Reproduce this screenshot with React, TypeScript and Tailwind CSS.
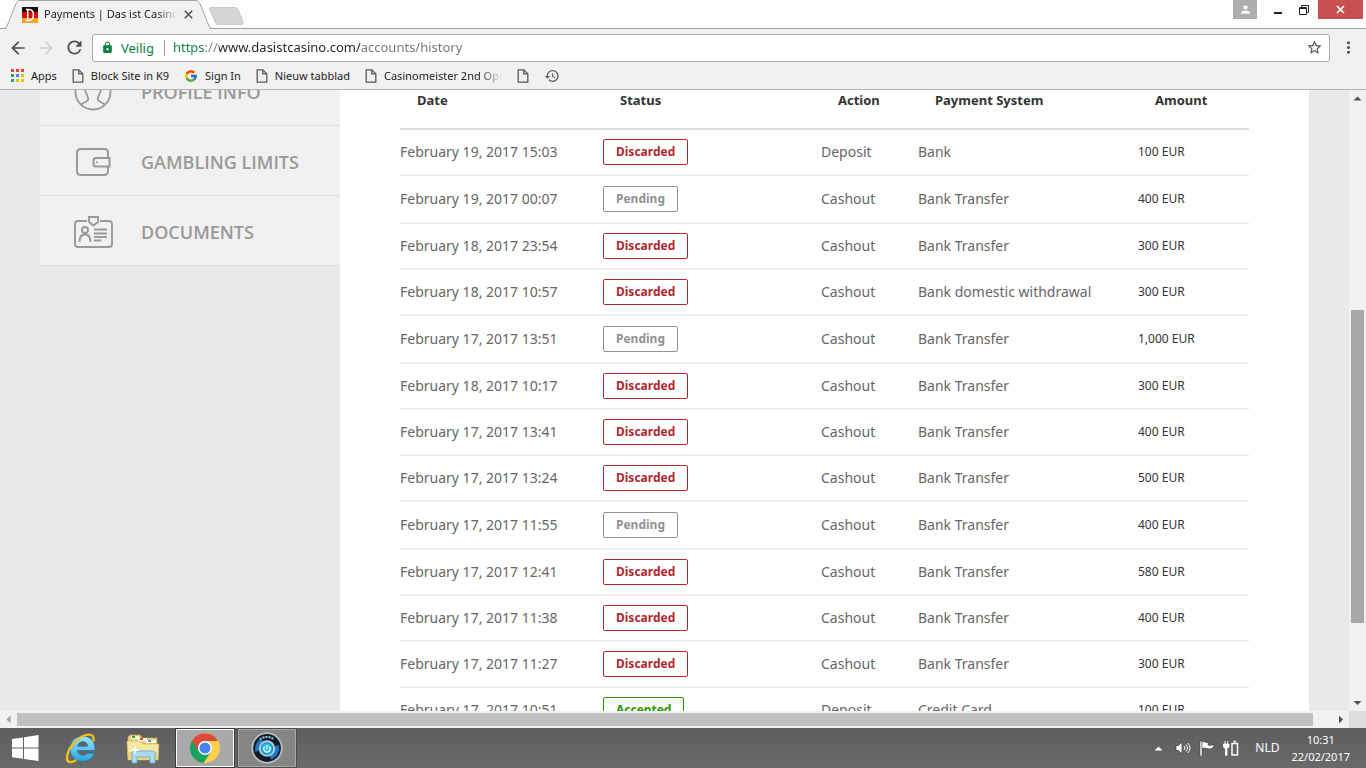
import { useState, type ReactNode } from 'react'
import { FcGoogle } from 'react-icons/fc'
import {
  MdArrowBack,
  MdArrowForward,
  MdHistory,
  MdLock,
  MdMoreVert,
  MdPerson,
  MdRefresh,
  MdStarBorder,
} from 'react-icons/md'

type Status = 'Discarded' | 'Pending' | 'Accepted'

type Payment = {
  date: string
  status: Status
  action: string
  system: string
  amount: string
}

const payments: Payment[] = [
  { date: 'February 19, 2017 15:03', status: 'Discarded', action: 'Deposit', system: 'Bank', amount: '100 EUR' },
  { date: 'February 19, 2017 00:07', status: 'Pending', action: 'Cashout', system: 'Bank Transfer', amount: '400 EUR' },
  { date: 'February 18, 2017 23:54', status: 'Discarded', action: 'Cashout', system: 'Bank Transfer', amount: '300 EUR' },
  { date: 'February 18, 2017 10:57', status: 'Discarded', action: 'Cashout', system: 'Bank domestic withdrawal', amount: '300 EUR' },
  { date: 'February 17, 2017 13:51', status: 'Pending', action: 'Cashout', system: 'Bank Transfer', amount: '1,000 EUR' },
  { date: 'February 18, 2017 10:17', status: 'Discarded', action: 'Cashout', system: 'Bank Transfer', amount: '300 EUR' },
  { date: 'February 17, 2017 13:41', status: 'Discarded', action: 'Cashout', system: 'Bank Transfer', amount: '400 EUR' },
  { date: 'February 17, 2017 13:24', status: 'Discarded', action: 'Cashout', system: 'Bank Transfer', amount: '500 EUR' },
  { date: 'February 17, 2017 11:55', status: 'Pending', action: 'Cashout', system: 'Bank Transfer', amount: '400 EUR' },
  { date: 'February 17, 2017 12:41', status: 'Discarded', action: 'Cashout', system: 'Bank Transfer', amount: '580 EUR' },
  { date: 'February 17, 2017 11:38', status: 'Discarded', action: 'Cashout', system: 'Bank Transfer', amount: '400 EUR' },
  { date: 'February 17, 2017 11:27', status: 'Discarded', action: 'Cashout', system: 'Bank Transfer', amount: '300 EUR' },
  { date: 'February 17, 2017 10:51', status: 'Accepted', action: 'Deposit', system: 'Credit Card', amount: '100 EUR' },
]

const statusStyles: Record<Status, string> = {
  Discarded: 'border-[#b0282e] text-[#b0282e]',
  Pending: 'border-[#919191] text-[#919191]',
  Accepted: 'border-[#279400] text-[#279400]',
}

function FileIcon() {
  return (
    <svg width="12" height="14" viewBox="0 0 12 14" fill="none" stroke="#5a5a5a" strokeWidth="1.3" className="shrink-0">
      <path d="M1.2 .8h5.6l4 4v8.4H1.2z" />
      <path d="M6.8 .8v4h4" />
    </svg>
  )
}

function AppsIcon() {
  const colors = ['#ea4335', '#ea4335', '#ea4335', '#34a05a', '#4285f4', '#fbbc05', '#34a05a', '#fbbc05', '#fbbc05']
  return (
    <svg width="13" height="13" viewBox="0 0 13 13">
      {colors.map((color, i) => (
        <rect key={i} x={(i % 3) * 5} y={Math.floor(i / 3) * 5} width="3" height="3" fill={color} />
      ))}
    </svg>
  )
}

function Favicon() {
  return (
    <svg width="16" height="16" viewBox="0 0 16 16" className="shrink-0">
      <rect width="16" height="6" fill="#1a0a08" />
      <rect y="5" width="16" height="6" fill="#d00a0a" />
      <rect y="11" width="16" height="5" fill="#f5a623" />
      <path d="M5.700 2.500v11M4 2.600h3c3 0 4.400 2 4.400 5.400s-1.400 5.400-4.400 5.400H4" fill="none" stroke="#fff" strokeWidth="1.500" />
    </svg>
  )
}

function TabStrip() {
  return (
    <div className="flex h-7 items-start justify-between bg-[#fdfdfd]">
      <div className="flex">
        <div className="relative h-[29px] w-[216px]">
          <svg className="absolute inset-0" width="216" height="29" viewBox="0 0 216 29" fill="none">
            <path d="M5 29c2-.5 2.300-1.500 3-3l9-22c.8-2 1.500-3.500 4-3.500h174c2.500 0 3.200 1.500 4 3.500l9 22c.7 1.500 1 2.500 3 3z" fill="#f1f1f1" />
            <path d="M0 28.500h3c2.500 0 3.300-1 4-2.500l9-22c.8-2 1.500-3.500 4-3.500h176c2.500 0 3.200 1.500 4 3.500l9 22c.7 1.500 1.500 2.500 4 2.500h3" stroke="#a3a3a3" />
          </svg>
          <div className="relative flex h-[29px] items-center gap-1.5 pl-[22px]">
            <Favicon />
            <span className="w-[134px] overflow-hidden whitespace-nowrap text-[11px] text-[#222] [mask-image:linear-gradient(to_right,#000_84%,transparent)]">
              Payments | Das ist Casino
            </span>
            <button type="button" aria-label="Close tab" className="shrink-0">
              <svg width="9" height="9" viewBox="0 0 9 9" stroke="#555" strokeWidth="1.600">
                <path d="M.8 .8l7.400 7.400M8.200 .8L.8 8.200" />
              </svg>
            </button>
          </div>
        </div>
        <button type="button" aria-label="New tab" className="-ml-2 mt-[7px] self-start">
          <svg width="36" height="18" viewBox="0 0 36 18">
            <path d="M3 .5h24.500c1.200 0 1.800.5 2.300 1.600l5.400 13.400c.4 1.200 0 1.800-1.200 1.800H10c-1.200 0-2-.5-2.500-1.600L1.700 2.300C1.200 1.100 1.700 .5 3 .5z" fill="#d5d5d5" stroke="#c6c6c6" />
          </svg>
        </button>
      </div>
      <div className="flex h-[19px] items-center pr-[3px]">
        <button type="button" aria-label="Profile" className="flex h-full w-6 items-center justify-center bg-[#aeaeae] text-white">
          <MdPerson size={13} />
        </button>
        <button type="button" aria-label="Minimize" className="ml-2 flex h-full w-[26px] items-center justify-center">
          <svg width="9" height="10" viewBox="0 0 9 10">
            <path d="M0 7h8v2H0z" fill="#222" />
          </svg>
        </button>
        <button type="button" aria-label="Restore" className="flex h-full w-[26px] items-center justify-center">
          <svg width="10" height="10" viewBox="0 0 10 10" fill="none" stroke="#222">
            <path d="M2.500 2V.5h7v7H8" />
            <path d="M.5 2.500h7v7h-7zM.5 3.500h7" />
          </svg>
        </button>
        <button type="button" aria-label="Close" className="ml-px flex h-full w-[45px] items-center justify-center bg-[#c75050]">
          <svg width="9" height="9" viewBox="0 0 9 9" stroke="#fff" strokeWidth="1.700">
            <path d="M1 1l7 7M8 1L1 8" />
          </svg>
        </button>
      </div>
    </div>
  )
}

function AddressBar() {
  const [url, setUrl] = useState('https://www.dasistcasino.com/accounts/history')

  return (
    <div className="flex h-[38px] items-center border-t border-[#a3a3a3] pl-2 pr-2">
      <button type="button" aria-label="Back" className="w-7 text-[#4f4f4f]">
        <MdArrowBack size={20} />
      </button>
      <button type="button" aria-label="Forward" className="w-7 text-[#cfcfcf]">
        <MdArrowForward size={20} />
      </button>
      <button type="button" aria-label="Reload" className="w-7 text-[#4f4f4f]">
        <MdRefresh size={21} />
      </button>
      <div className="flex h-7 flex-1 items-center rounded-[3px] border border-[#a9a9a9] bg-white pl-2 pr-1.5">
        <MdLock size={13} className="text-[#0b8043]" />
        <label htmlFor="omnibox" className="ml-[7px] border-r border-[#9a9a9a] pr-2.5 text-[13px] leading-4 text-[#0b8043]">
          Veilig
        </label>
        <input
          id="omnibox"
          type="text"
          value={url}
          onChange={(event) => setUrl(event.target.value)}
          className="ml-2 flex-1 bg-[linear-gradient(to_right,#0b8043_32px,#808080_32px,#808080_46px,#222_46px,#222_187px,#757575_187px)] bg-clip-text text-[13px] text-transparent caret-black outline-none"
        />
        <button type="button" aria-label="Bookmark this page" className="text-[#555]">
          <MdStarBorder size={17} />
        </button>
      </div>
      <button type="button" aria-label="Menu" className="ml-[9px] text-[#555]">
        <MdMoreVert size={19} />
      </button>
    </div>
  )
}

function Bookmark({ icon, label, className = '' }: { icon: ReactNode; label?: string; className?: string }) {
  return (
    <a href="#" aria-label={label ?? 'Bookmark'} className={`flex items-center gap-[7px] ${className}`}>
      {icon}
      {label ? <span className="overflow-hidden whitespace-nowrap">{label}</span> : null}
    </a>
  )
}

function BookmarksBar() {
  return (
    <nav className="flex h-6 items-center gap-[15px] border-b border-[#b4b4b4] pb-1 pl-[11px] text-[11px] leading-[14px] text-[#222]">
      <Bookmark icon={<AppsIcon />} label="Apps" />
      <Bookmark icon={<FileIcon />} label="Block Site in K9" />
      <Bookmark icon={<FcGoogle size={14} />} label="Sign In" />
      <Bookmark icon={<FileIcon />} label="Nieuw tabblad" />
      <Bookmark
        icon={<FileIcon />}
        label="Casinomeister 2nd Opinion"
        className="w-[137px] [mask-image:linear-gradient(to_right,#000_84%,transparent)]"
      />
      <Bookmark icon={<FileIcon />} />
      <Bookmark icon={<MdHistory size={16} className="text-[#5a5a5a]" />} />
    </nav>
  )
}

function ProfileIcon() {
  return (
    <svg width="40" height="40" viewBox="0 0 40 40" fill="none" stroke="#999" strokeWidth="1.800">
      <circle cx="20" cy="20" r="17.500" />
      <path d="M8 33c1-2 6-3 7-5s-1-5-2.500-8.500C11 15 13 8 20 8s9 7 7.500 11.500C26 23 24 26 25 28s6 3 7 5" />
    </svg>
  )
}

function WalletIcon() {
  return (
    <svg width="40" height="40" viewBox="0 0 40 40" fill="none" stroke="#999" strokeWidth="2">
      <path d="M35 15.500V11c0-2.500-1.500-4-4-4H8c-2.500 0-4 1.500-4 4v18c0 2.500 1.500 4 4 4h23c2.500 0 4-1.500 4-4v-4" />
      <path d="M36.500 16H23c-1.500 0-2.500 1-2.500 2.500v3.500c0 1.500 1 2.500 2.500 2.500h13.500z" />
      <circle cx="24" cy="20.200" r="1" fill="#999" stroke="none" />
    </svg>
  )
}

function DocumentsIcon() {
  return (
    <svg width="40" height="40" viewBox="0 0 40 40" fill="none" stroke="#999" strokeWidth="1.900">
      <path d="M14 9H5C3 9 2 10 2 12v20c0 2 1 3 3 3h31c2 0 3-1 3-3V12c0-2-1-3-3-3h-9" />
      <path d="M16 5h9v5l-4.500 3.500L16 10z" />
      <circle cx="12" cy="18" r="3" />
      <path d="M6.500 30c0-5 2-7.500 5.500-7.500s5.500 2.500 5.500 7.500" />
      <path d="M21 17.500h13M21 21.500h13M21 25h13M21 28.500h7.500" />
    </svg>
  )
}

function SidebarItem({ icon, label }: { icon: ReactNode; label: string }) {
  return (
    <li>
      <a
        href="#"
        className="flex h-[70px] items-center gap-7 border-b border-[#dfdfdf] bg-[#f1f1f1] pl-[33px] pt-0.5 text-[18px] leading-none font-semibold text-[#999]"
      >
        {icon}
        {label}
      </a>
    </li>
  )
}

function Sidebar() {
  return (
    <aside className="ml-10 w-[300px] shrink-0 font-['Open_Sans',sans-serif]">
      <ul className="-mt-[34px]">
        <SidebarItem icon={<ProfileIcon />} label="PROFILE INFO" />
        <SidebarItem icon={<WalletIcon />} label="GAMBLING LIMITS" />
        <SidebarItem icon={<DocumentsIcon />} label="DOCUMENTS" />
      </ul>
    </aside>
  )
}

function PaymentsTable() {
  return (
    <table className="-mt-[21px] w-full table-fixed border-collapse text-left text-[14px] text-[#666]">
      <colgroup>
        <col className="w-[203px]" />
        <col className="w-[218px]" />
        <col className="w-[97px]" />
        <col className="w-[220px]" />
        <col />
      </colgroup>
      <thead>
        <tr className="h-[60px] border-b-2 border-[#dedede] text-[13px] text-[#333]">
          <th className="pl-[17px] pt-1">Date</th>
          <th className="pl-[17px] pt-1">Status</th>
          <th className="pl-[17px] pt-1">Action</th>
          <th className="pl-[17px] pt-1">Payment System</th>
          <th className="pl-[17px] pt-1">Amount</th>
        </tr>
      </thead>
      <tbody>
        {payments.map((payment) => (
          <tr
            key={payment.date}
            className={`border-b-2 border-[#efefef] ${payment.status === 'Pending' ? 'h-12' : 'h-[46px]'}`}
          >
            <td className="pb-0.5">{payment.date}</td>
            <td>
              <span
                className={`flex h-[26px] w-fit items-center rounded-[2px] border px-3 text-[12px] font-bold ${statusStyles[payment.status]}`}
              >
                {payment.status}
              </span>
            </td>
            <td className="pb-0.5">{payment.action}</td>
            <td className="pb-0.5">{payment.system}</td>
            <td className="text-[12px] text-[#333]">{payment.amount}</td>
          </tr>
        ))}
      </tbody>
    </table>
  )
}

function Arrow({ d, color = '#505050' }: { d: string; color?: string }) {
  return (
    <svg width="9" height="9" viewBox="0 0 9 9" fill={color}>
      <path d={d} />
    </svg>
  )
}

function VerticalScrollbar() {
  return (
    <div className="flex w-[17px] shrink-0 flex-col items-center bg-[#f1f1f1]">
      <div className="flex h-[17px] items-center">
        <Arrow d="M.5 6.500l4-4 4 4z" />
      </div>
      <div className="flex w-full flex-1 flex-col items-center">
        <div className="grow-[203]" />
        <div className="w-[13px] grow-[313] bg-[#a8a8a8]" />
        <div className="grow-[71]" />
      </div>
      <div className="flex h-[17px] items-center">
        <Arrow d="M.5 3l4 4 4-4z" />
      </div>
    </div>
  )
}

function HorizontalScrollbar() {
  return (
    <div className="flex h-[17px] shrink-0 bg-[#f1f1f1]">
      <div className="flex w-[17px] items-center justify-center">
        <Arrow d="M6.500 .5l-4 4 4 4z" color="#a3a3a3" />
      </div>
      <div className="flex flex-1 items-center">
        <div className="h-[13px] w-full bg-[#c1c1c1]" />
        <div className="w-[19px] shrink-0" />
      </div>
      <div className="flex w-[17px] items-center justify-center">
        <Arrow d="M3 .5l4 4-4 4z" />
      </div>
      <div className="w-[17px] bg-[#dcdcdc]" />
    </div>
  )
}

function WindowsLogo() {
  return (
    <svg width="27" height="26" viewBox="0 0 27 26" fill="#fff">
      <path d="M0 4l11-1.600v10.200H0zM12 2.200L26.500 0v12.600H12zM0 13.500h11v10.200L0 22.200zM12 13.500h14.500V26L12 23.900z" />
    </svg>
  )
}

function ExplorerLogo() {
  return (
    <svg width="32" height="32" viewBox="0 0 32 32" fill="none">
      <defs>
        <linearGradient id="ie" x1="0" y1="0" x2="0" y2="1">
          <stop offset="0" stopColor="#9be3fb" />
          <stop offset="1" stopColor="#2aa5e0" />
        </linearGradient>
      </defs>
      <path
        d="M30 18.500H12.500c.3 3 2.300 4.800 5.300 4.800 2 0 3.400-.7 4.300-2.100h7.200c-1.600 5-5.800 8.100-11.500 8.100C10.500 29.300 5.200 24.500 5.200 17S10.500 4.200 17.800 4.200c7.700 0 12.600 5.300 12.200 14.300zM12.600 14.300h10.300c-.4-2.900-2.100-4.600-5-4.600s-4.800 1.700-5.300 4.600z"
        fill="url(#ie)"
        stroke="#1672ac"
        strokeWidth=".6"
      />
      <path d="M28.500 8.500c.6-3.500-.8-5.900-4.500-5.900C14 2.600 2 16.500 2 26c0 4.500 4 5.300 8.500 2.500" stroke="#f3bd1d" strokeWidth="2.400" strokeLinecap="round" />
    </svg>
  )
}

function FolderLogo() {
  return (
    <svg width="34" height="32" viewBox="0 0 34 32">
      <path d="M2 5l2-2h10l2 3h15v6H2z" fill="#e9cf83" stroke="#c9a94d" strokeWidth=".6" />
      <path d="M5 4h8v3H5zM12 6h9v3h-9zM20 8h10v3H20z" fill="#fffbe8" />
      <path d="M6 4h3v2H6z" fill="#19b52c" />
      <path d="M14 6h3v2h-3z" fill="#e2472e" />
      <path d="M22 8h3v2h-3z" fill="#2d9be6" />
      <path d="M1 9h13l3 3h16l-1 16H2z" fill="#f7e7a1" stroke="#d2b45c" strokeWidth=".6" />
      <path d="M1.500 20h31L32 28H2z" fill="#eed37b" />
      <path d="M6 31V21c0-1.500 1-2 2-2h19c1 0 2 .5 2 2v10h-5v-6H11v6z" fill="#a9dcf3" stroke="#5fa9cf" strokeWidth=".8" />
      <path d="M9 13l1 4 4 1-4 1-1 4-1-4-4-1 4-1z" fill="#fff" />
    </svg>
  )
}

function ChromeLogo() {
  return (
    <svg width="30" height="30" viewBox="0 0 30 30">
      <circle cx="15" cy="15" r="15" fill="#fdd14b" />
      <path d="M2 7.500A15 15 0 0 0 13.500 30L21 18.500 15 15z" fill="#1aa260" />
      <path d="M2 7.500A15 15 0 0 1 28 8H15a7 7 0 0 0-6.500 10z" fill="#da4b3e" />
      <circle cx="15" cy="15" r="7" fill="#fff" />
      <circle cx="15" cy="15" r="5.500" fill="#4584ee" />
    </svg>
  )
}

function PowerLogo() {
  return (
    <svg width="32" height="32" viewBox="0 0 32 32" fill="none">
      <circle cx="16" cy="16" r="14.800" fill="#101c28" stroke="#b9bcbe" strokeWidth="1.800" />
      <path d="M4.500 20A12 12 0 0 1 10 6.500l3 5a7 7 0 0 0-3 6zM20 27.500A12 12 0 0 0 27.800 13L22 15a7 7 0 0 1-4 7.500z" fill="#1a78c4" />
      <path d="M9 7.500a11 11 0 0 1 14 0" stroke="#8fc4ea" strokeWidth="2" strokeDasharray="2 1" />
      <circle cx="16" cy="16.500" r="7.300" fill="#0d98dc" stroke="#bfc7cb" strokeWidth="2" />
      <circle cx="16" cy="16.500" r="4.800" fill="#28c4f5" />
      <path d="M16 13v4M13.700 14.500a3.200 3.200 0 1 0 4.600 0" stroke="#e9fbff" strokeWidth="1.200" />
    </svg>
  )
}

function Taskbar() {
  return (
    <footer className="flex h-10 shrink-0 items-center justify-between bg-linear-to-b from-[#5d5d5f] to-[#6a6a6b] text-white">
      <div className="flex h-full items-center">
        <button type="button" aria-label="Start" className="flex w-[50px] justify-center">
          <WindowsLogo />
        </button>
        <button type="button" aria-label="Internet Explorer" className="flex w-[62px] justify-center">
          <ExplorerLogo />
        </button>
        <button type="button" aria-label="File Explorer" className="flex w-[62px] justify-center">
          <FolderLogo />
        </button>
        <button type="button" aria-label="Google Chrome" className="ml-px flex h-full w-[60px] items-center justify-center border border-[#3c3c3c] bg-[#a9a9a9] outline outline-1 -outline-offset-2 outline-white">
          <ChromeLogo />
        </button>
        <button type="button" aria-label="Media player" className="ml-0.5 flex h-full w-[60px] items-center justify-center border border-[#4a4a4a] bg-[#858585] outline outline-1 -outline-offset-2 outline-[#a8a8a8]">
          <PowerLogo />
        </button>
      </div>
      <div className="flex items-center pr-4 text-[12px]">
        <button type="button" aria-label="Show hidden icons">
          <Arrow d="M.5 6.500l4-4 4 4z" color="#fff" />
        </button>
        <svg width="16" height="16" viewBox="0 0 16 16" fill="none" stroke="#fff" className="ml-3">
          <path d="M1 5.500h2.500L7 2v12L3.500 10.500H1z" fill="#fff" stroke="#333" strokeWidth=".7" />
          <path d="M9 6a3 3 0 0 1 0 4M11 4.500a5 5 0 0 1 0 7M13 3a8 8 0 0 1 0 10" />
        </svg>
        <svg width="16" height="16" viewBox="0 0 16 16" className="ml-2">
          <path d="M1 1h2v15H1z" fill="#fff" stroke="#333" strokeWidth=".5" />
          <path d="M3 2c3-1 4 1 6 .5V5c2 .7 4 .3 6-.2-.5 3-2.500 5-7 3.700C6 8 5 7.700 3 8.500z" fill="#fff" stroke="#333" strokeWidth=".5" />
        </svg>
        <svg width="16" height="16" viewBox="0 0 16 16" fill="none" className="ml-2">
          <path d="M2 1v3M4.500 1v3M.5 4h5.500v2.500c0 1-.8 1.700-2 1.700v7H2.500v-7c-1.200 0-2-.7-2-1.700z" fill="#fff" stroke="#fff" strokeWidth=".9" />
          <path d="M9 3.500h5.500v11.500H9zM10.500 1.500h2.500" stroke="#fff" strokeWidth="1.500" />
        </svg>
        <span className="ml-4">NLD</span>
        <time dateTime="2017-02-22T10:31" className="ml-3 flex flex-col text-center text-[11px] leading-[17px]">
          <span>10:31</span>
          <span>22/02/2017</span>
        </time>
      </div>
    </footer>
  )
}

export default function App() {
  return (
    <div className="flex h-screen flex-col overflow-hidden bg-[#f1f1f1] font-['Noto_Sans',sans-serif]">
      <header className="shrink-0">
        <TabStrip />
        <AddressBar />
        <BookmarksBar />
      </header>
      <div className="flex min-h-0 flex-1">
        <div className="flex min-w-0 flex-1 overflow-hidden bg-[#e9e9e9] pr-10">
          <Sidebar />
          <main className="flex-1 bg-white px-[60px]">
            <PaymentsTable />
          </main>
        </div>
        <VerticalScrollbar />
      </div>
      <HorizontalScrollbar />
      <Taskbar />
    </div>
  )
}
